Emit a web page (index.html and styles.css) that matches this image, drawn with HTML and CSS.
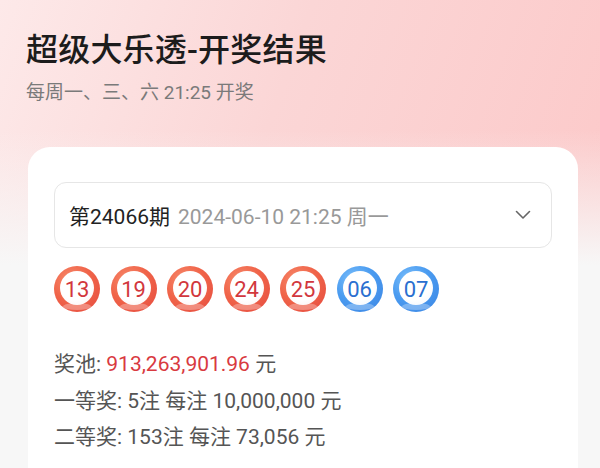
FILE: index.html
```html
<!doctype html>
<html lang="zh-CN">
	<head>
		<meta charset="utf-8">
		<meta name="viewport" content="width=device-width, initial-scale=1.0">
		<title>超级大乐透-开奖结果</title>
		<link rel="stylesheet" href="styles.css">
	</head>
  <body>
    <header class="page-head">
      <h1 class="title">超级大乐透-开奖结果</h1>
      <div class="subtitle">每周一、三、六 21:25 开奖</div>
    </header>

    <main class="card">
      <div class="issue">
        <span class="issue-no">第24066期</span>
        <span class="issue-date">2024-06-10 21:25 周一</span>
        <svg class="chevron" width="16" height="10" viewBox="0 0 16 10">
          <path d="M1.5 1.5 L8 8 L14.5 1.5" fill="none" stroke="#666" stroke-width="1.6" stroke-linecap="round" stroke-linejoin="round"/>
        </svg>
      </div>

      <div class="balls">
        <span class="ball ball-red">13</span>
        <span class="ball ball-red">19</span>
        <span class="ball ball-red">20</span>
        <span class="ball ball-red">24</span>
        <span class="ball ball-red">25</span>
        <span class="ball ball-blue">06</span>
        <span class="ball ball-blue">07</span>
      </div>

      <div class="prizes">
        <div class="prize-line">奖池: <span class="pool">913,263,901.96</span> 元</div>
        <div class="prize-line">一等奖: 5注 每注 10,000,000 元</div>
        <div class="prize-line">二等奖: 153注 每注 73,056 元</div>
      </div>
    </main>
  </body>
</html>
```

FILE: styles.css
```css
* { box-sizing: border-box; }

html,
body {
	margin: 0;
	padding: 0;
	height: 100%;
}

body {
	font-family: Roboto, "Noto Sans CJK SC", sans-serif;
	color: #222;
	background-color: #f7f7f7;
	background-image:
		linear-gradient(180deg, rgba(247, 247, 247, 0) 0px, rgba(247, 247, 247, 0) 130px, #f7f7f7 265px),
		linear-gradient(110deg, #fde9e9 0%, #fbd6d6 45%, #fcc9c9 100%);
	background-repeat: no-repeat;
	background-size: 100% 100%, 100% 270px;
	overflow: hidden;
}

/* Header */
.page-head {
	padding: 28px 26px 0;
}

.title {
	margin: 0;
	font-size: 32px;
	font-weight: 500;
	line-height: 44px;
	color: #1c1c1c;
	letter-spacing: 0.2px;
}

.subtitle {
	margin-top: 8px;
	font-size: 19px;
	line-height: 26px;
	color: #7a7a7a;
}

/* Card */
.card {
	margin: 41px 22px 0 28px;
	padding: 35px 26px 0;
	background: #fff;
	border-radius: 22px 22px 0 0;
	min-height: 330px;
}

.issue {
	display: flex;
	align-items: center;
	height: 66px;
	padding: 0 20px 0 14px;
	border: 1px solid #e6e6e6;
	border-radius: 12px;
	font-size: 21px;
}

.issue-no {
	color: #222;
}

.issue-date {
	margin-left: 8px;
	color: #999;
}

.chevron {
	margin-left: auto;
}

/* Balls */
.balls {
	display: flex;
	gap: 10.5px;
	margin-top: 18px;
}

.ball {
	position: relative;
	display: flex;
	align-items: center;
	justify-content: center;
	width: 46px;
	height: 46px;
	border-radius: 50%;
	font-size: 22px;
	z-index: 0;
}

.ball:before {
	content: "";
	position: absolute;
	left: 6px;
	top: 5px;
	width: 34px;
	height: 34px;
	border-radius: 50%;
	background: radial-gradient(circle at 45% 40%, #ffffff 55%, #fbeeee 100%);
	z-index: -1;
}

.ball:after {
	content: "";
	position: absolute;
	left: 9px;
	bottom: 2px;
	width: 28px;
	height: 7px;
	border-radius: 50%;
	background: rgba(255, 255, 255, 0.3);
	z-index: -2;
}

.ball-red {
	color: #d2373d;
	background: radial-gradient(circle at 35% 30%, #f78a6c 0%, #f06449 45%, #e54a3f 100%);
}

.ball-blue {
	color: #2a6fd0;
	background: radial-gradient(circle at 35% 30%, #7cc0fb 0%, #4a9bf0 45%, #3b84e3 100%);
}

.ball-blue:before {
	background: radial-gradient(circle at 45% 40%, #ffffff 55%, #eef4fd 100%);
}

/* Prize lines */
.prizes {
	margin-top: 34px;
}

.prize-line {
	font-size: 21px;
	line-height: 36.5px;
	color: #555;
}

.pool {
	color: #d93a3f;
}
```
